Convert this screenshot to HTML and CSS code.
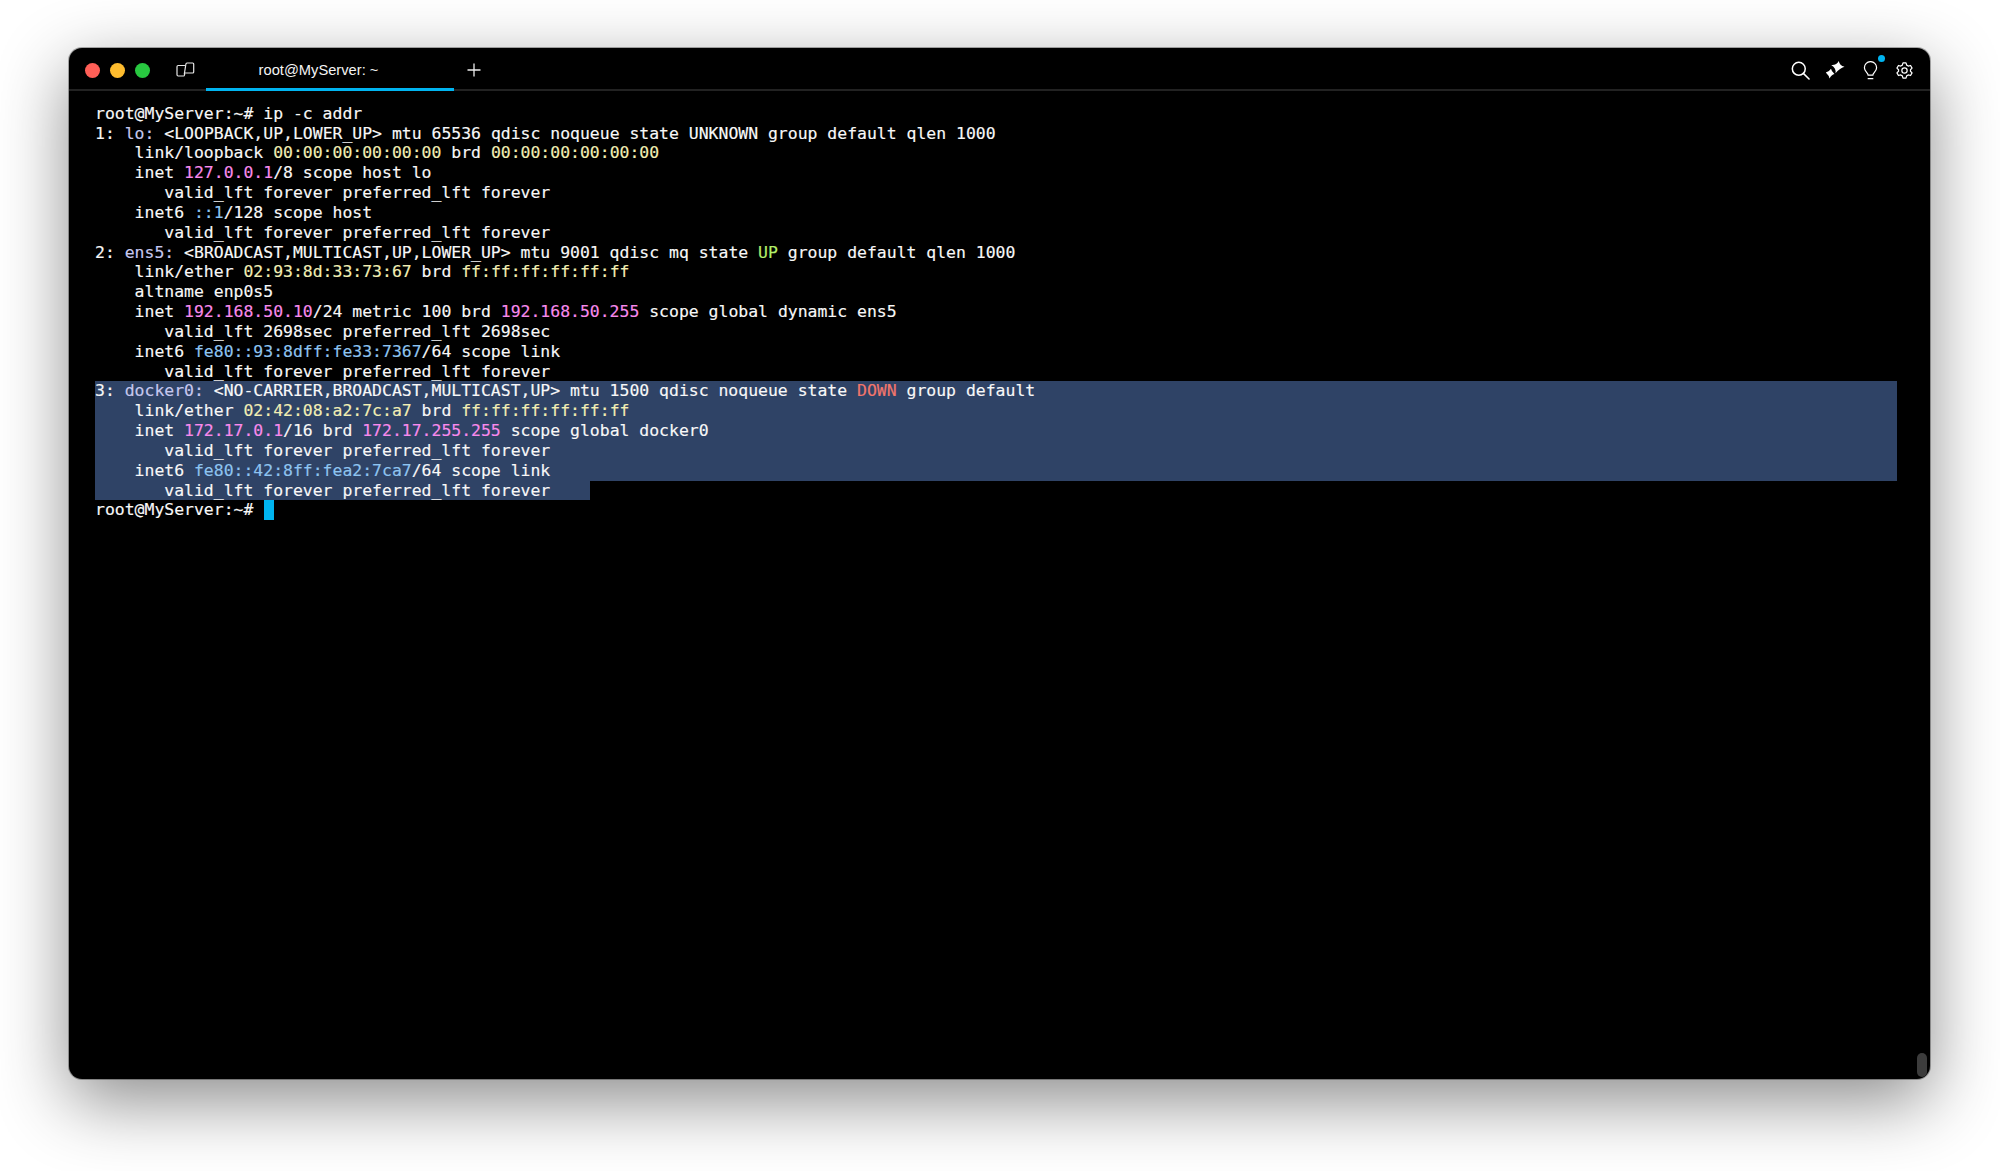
FILE: index.html
```html
<!DOCTYPE html>
<html lang="en">
<head>
<meta charset="utf-8">
<title>root@MyServer: ~</title>
<link rel="stylesheet" href="styles.css">
</head>
<body>
<main class="window">
  <header class="titlebar">
    <div class="lights">
      <span class="light red"></span>
      <span class="light yellow"></span>
      <span class="light green"></span>
    </div>
    <svg class="book" width="19" height="15" viewBox="0 0 19 15" fill="none" stroke="#e8e8e8" stroke-width="1.200" stroke-linejoin="round" stroke-linecap="round"><path d="M8.500 3.500H2.200c-.7 0-1.200.5-1.200 1.200v8.100c0 .7.5 1.200 1.200 1.200h5.300c.5 0 .9-.3 1-.8l.2-1.400"/><path d="M8.300 12.100 9.900 2c.1-.6.5-1 1.100-1h5.700c.6 0 1 .4 1 1v8c0 .6-.4 1-1 1H8.500"/></svg>
    <div class="tab">root@MyServer: ~</div>
    <svg class="plus" width="14" height="14" viewBox="0 0 14 14" stroke="#eee" stroke-width="1.300"><path d="M7 .5v13M.5 7h13"/></svg>
    <div class="tools">
      <svg class="search" width="19" height="19" viewBox="0 0 20 20" fill="none" stroke="#fff" stroke-width="1.600" stroke-linecap="round"><circle cx="8.200" cy="8.200" r="6.800"/><path d="M13 13l6 6"/></svg>
      <svg class="spark" width="20" height="19" viewBox="0 0 20 19" fill="#fff"><path d="M13.800 0Q14.500 4.500 19.500 5.700Q14.500 7.200 10.500 12.300Q11.500 7.500 6.200 4Q11.500 4.500 13.800 0z"/><path d="M6 7.800Q6.500 10.500 9.500 13Q6.500 13.500 4.500 17.500Q4 14.500 .8 11.500Q4 11 6 7.800z"/></svg>
      <span class="bulb-wrap">
        <svg width="15" height="19" viewBox="0 0 16 20" fill="none" stroke="#fff" stroke-width="1.300" stroke-linecap="round"><path d="M5.500 15c0-2.500-4-4-4-8a6.500 6.500 0 0 1 13 0c0 4-4 5.500-4 8z"/><path d="M5.500 18.700h5"/></svg>
        <span class="dot"></span>
      </span>
      <svg class="gear" width="17" height="17" viewBox="0 0 18 18" fill="none" stroke="#fff" stroke-width="1.300" stroke-linejoin="round"><path d="M7.400 1h3.200l.7 2.300 1.700 1 2.400-.6 1.600 2.800L15.300 8.200v1.600l1.700 1.700-1.600 2.800-2.400-.6-1.700 1-.7 2.300H7.400l-.7-2.300-1.700-1-2.400.6L1 11.500l1.700-1.700V8.200L1 6.500l1.600-2.800 2.400.6 1.700-1z"/><circle cx="9" cy="9" r="2.800"/></svg>
    </div>
  </header>
  <section class="term">
    <div class="line">root@MyServer:~# ip -c addr</div>
    <div class="line">1: <span class="ifn">lo:</span> &lt;LOOPBACK,UP,LOWER_UP&gt; mtu 65536 qdisc noqueue state UNKNOWN group default qlen 1000</div>
    <div class="line">    link/loopback <span class="mac">00:00:00:00:00:00</span> brd <span class="mac">00:00:00:00:00:00</span></div>
    <div class="line">    inet <span class="ip4">127.0.0.1</span>/8 scope host lo</div>
    <div class="line">       valid_lft forever preferred_lft forever</div>
    <div class="line">    inet6 <span class="ip6">::1</span>/128 scope host</div>
    <div class="line">       valid_lft forever preferred_lft forever</div>
    <div class="line">2: <span class="ifn">ens5:</span> &lt;BROADCAST,MULTICAST,UP,LOWER_UP&gt; mtu 9001 qdisc mq state <span class="up">UP</span> group default qlen 1000</div>
    <div class="line">    link/ether <span class="mac">02:93:8d:33:73:67</span> brd <span class="mac">ff:ff:ff:ff:ff:ff</span></div>
    <div class="line">    altname enp0s5</div>
    <div class="line">    inet <span class="ip4">192.168.50.10</span>/24 metric 100 brd <span class="ip4">192.168.50.255</span> scope global dynamic ens5</div>
    <div class="line">       valid_lft 2698sec preferred_lft 2698sec</div>
    <div class="line">    inet6 <span class="ip6">fe80::93:8dff:fe33:7367</span>/64 scope link</div>
    <div class="line">       valid_lft forever preferred_lft forever</div>
    <div class="line sel">3: <span class="ifn">docker0:</span> &lt;NO-CARRIER,BROADCAST,MULTICAST,UP&gt; mtu 1500 qdisc noqueue state <span class="down">DOWN</span> group default</div>
    <div class="line sel">    link/ether <span class="mac">02:42:08:a2:7c:a7</span> brd <span class="mac">ff:ff:ff:ff:ff:ff</span></div>
    <div class="line sel">    inet <span class="ip4">172.17.0.1</span>/16 brd <span class="ip4">172.17.255.255</span> scope global docker0</div>
    <div class="line sel">       valid_lft forever preferred_lft forever</div>
    <div class="line sel">    inet6 <span class="ip6">fe80::42:8ff:fea2:7ca7</span>/64 scope link</div>
    <div class="line sel sel-end">       valid_lft forever preferred_lft forever</div>
    <div class="line">root@MyServer:~# <span class="cursor"></span></div>
    <span class="thumb"></span>
  </section>
</main>
</body>
</html>
```
FILE: styles.css
```css
* { box-sizing: border-box; }
html, body { margin: 0; height: 100%; background: #fff; overflow: hidden; }
body { padding: 48px 70px 92px 69px; }

.window {
  height: 1031px;
  background: #000;
  border-radius: 13px;
  box-shadow: 0 0 0 1px rgba(0,0,0,.3), 0 22px 70px rgba(0,0,0,.46);
  display: flex;
  flex-direction: column;
  overflow: hidden;
  position: relative;
}

.titlebar {
  height: 43px;
  flex: none;
  display: flex;
  align-items: center;
  border-bottom: 2px solid #222;
  padding: 4px 17px 0 16px;
}
.lights { display: flex; gap: 10px; }
.light { width: 15px; height: 15px; border-radius: 50%; }
.red { background: #ff5f57; }
.yellow { background: #febc2e; }
.green { background: #28c840; }
.book { margin: 0 0 2px 26px; }
.tab {
  width: 248px;
  height: 30px;
  margin: 0 0 -2px 11px;
  padding-right: 23px;
  align-self: flex-end;
  flex: none;
  border-bottom: 3px solid #00b4f0;
  color: #f4f4f4;
  font: 14.700px/18px "Liberation Sans", sans-serif;
  text-align: center;
}
.plus { margin: 0 0 2px 13px; }
.tools { margin-left: auto; display: flex; align-items: center; gap: 15px; }
.tools svg { flex: none; }
.bulb-wrap { position: relative; display: flex; margin: 0 3px 0 2px; }
.spark { margin-right: 1px; }
.dot { position: absolute; top: -6px; right: -7px; width: 7px; height: 7px; border-radius: 50%; background: #00b4f0; }

.term {
  flex: 1;
  padding: 12.800px 33px 0 26px;
  color: #f8f8f8;
  font: 16.440px/19.830px "DejaVu Sans Mono", monospace;
  -webkit-text-stroke: .15px currentColor;
  position: relative;
}
.line { height: 19.830px; white-space: pre; }
.sel { background: #2f4366; }
.sel-end { width: 495px; }
.ifn { color: #c6c8ee; }
.mac { color: #f2eeb4; }
.ip4 { color: #f88aec; }
.ip6 { color: #8ec4f0; }
.up { color: #b4f06a; }
.down { color: #f4766c; }
.cursor { display: inline-block; width: 10px; height: 19.830px; margin-left: .5px; background: #00b4f0; vertical-align: top; }
.thumb { position: absolute; right: 3px; bottom: 2px; width: 10px; height: 24px; border-radius: 5px; background: #3c3c3c; }
```
